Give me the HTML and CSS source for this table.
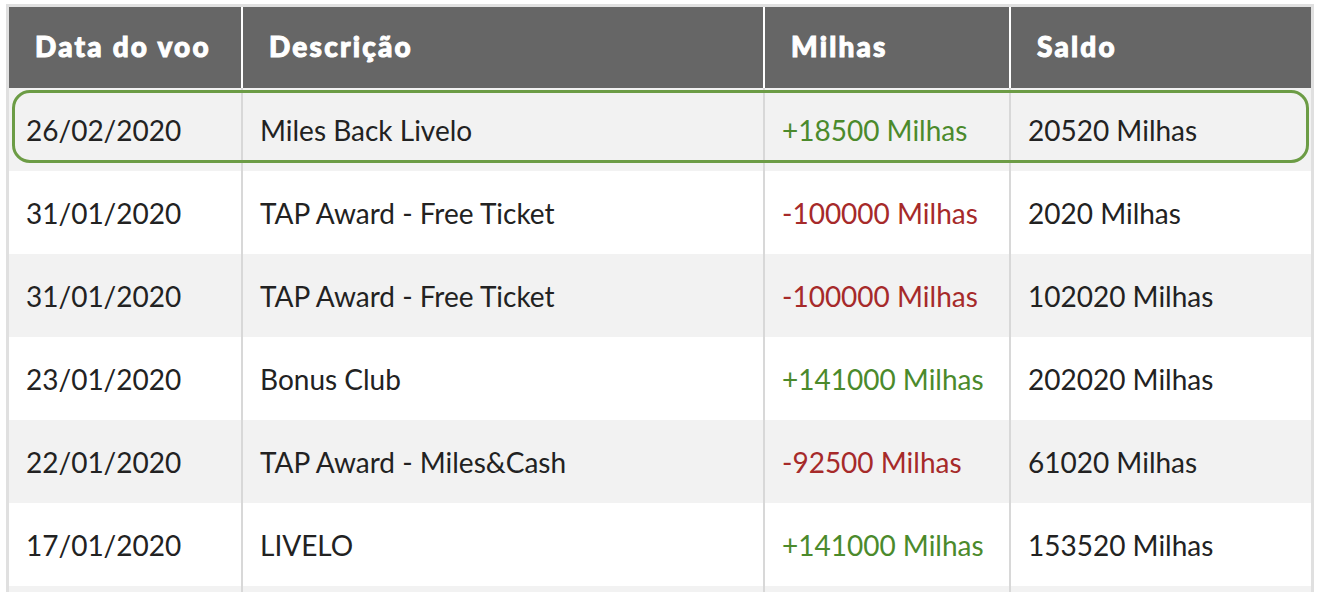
FILE: index.html
```html
<!DOCTYPE html>
<html lang="pt-BR">
<head>
<meta charset="utf-8">
<title>Extrato de milhas</title>
<link rel="stylesheet" href="styles.css">
</head>
<body>
<div class="page">
  <table class="statement">
    <colgroup>
      <col class="c-date">
      <col class="c-desc">
      <col class="c-miles">
      <col class="c-balance">
    </colgroup>
    <thead>
      <tr>
        <th>Data do voo</th>
        <th>Descrição</th>
        <th>Milhas</th>
        <th>Saldo</th>
      </tr>
    </thead>
    <tbody>
      <tr class="highlight">
        <td>26/02/2020</td>
        <td>Miles Back Livelo</td>
        <td class="pos">+18500 Milhas</td>
        <td>20520 Milhas</td>
      </tr>
      <tr>
        <td>31/01/2020</td>
        <td>TAP Award - Free Ticket</td>
        <td class="neg">-100000 Milhas</td>
        <td>2020 Milhas</td>
      </tr>
      <tr>
        <td>31/01/2020</td>
        <td>TAP Award - Free Ticket</td>
        <td class="neg">-100000 Milhas</td>
        <td>102020 Milhas</td>
      </tr>
      <tr>
        <td>23/01/2020</td>
        <td>Bonus Club</td>
        <td class="pos">+141000 Milhas</td>
        <td>202020 Milhas</td>
      </tr>
      <tr>
        <td>22/01/2020</td>
        <td>TAP Award - Miles&amp;Cash</td>
        <td class="neg">-92500 Milhas</td>
        <td>61020 Milhas</td>
      </tr>
      <tr>
        <td>17/01/2020</td>
        <td>LIVELO</td>
        <td class="pos">+141000 Milhas</td>
        <td>153520 Milhas</td>
      </tr>
      <tr>
        <td>&nbsp;</td>
        <td>&nbsp;</td>
        <td>&nbsp;</td>
        <td>&nbsp;</td>
      </tr>
    </tbody>
  </table>
</div>
</body>
</html>
```

FILE: styles.css
```css
html, body {
  margin: 0;
  padding: 0;
  background: #ffffff;
}

body {
  font-family: Lato, "Open Sans", "Liberation Sans", sans-serif;
  color: #222222;
  overflow: hidden;
}

.page {
  padding: 4px 0 0 6px;
}

.statement {
  width: 1308px;
  table-layout: fixed;
  border-collapse: separate;
  border-spacing: 0;
  border: 3px solid #e0e0e0;
  border-bottom: none;
}

.c-date { width: 232px; }
.c-desc { width: 522px; }
.c-miles { width: 246px; }
.c-balance { width: 302px; }

.statement th {
  height: 81px;
  box-sizing: border-box;
  padding: 0 0 3px 26px;
  background: #666666;
  color: #ffffff;
  font-size: 28px;
  line-height: 1;
  font-weight: 900;
  letter-spacing: 2.2px;
  -webkit-text-stroke: 1px #ffffff;
  text-align: left;
  vertical-align: middle;
  border-left: 2px solid #ffffff;
}

.statement th:first-child {
  border-left: none;
}

.statement td {
  height: 83px;
  padding: 0 0 0 17px;
  font-size: 28px;
  line-height: 1;
  vertical-align: middle;
  border-left: 2px solid #d8d8d8;
  white-space: nowrap;
}

.statement td:first-child {
  border-left: none;
}

.statement tbody tr:nth-child(odd) td {
  background: #f2f2f2;
}

.statement tbody tr:nth-child(even) td {
  background: #ffffff;
}

.statement td.pos {
  color: #4b8a2c;
}

.statement td.neg {
  color: #a62a2a;
}

.statement tr.highlight {
  position: relative;
}

.statement tr.highlight::after {
  content: "";
  position: absolute;
  top: 2px;
  left: 3px;
  right: 2px;
  bottom: 8px;
  border: 3px solid #6c9c45;
  border-radius: 18px;
  pointer-events: none;
}
```
